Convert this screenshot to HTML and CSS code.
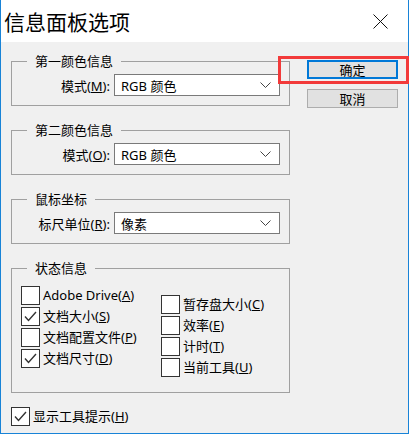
FILE: index.html
```html
<!DOCTYPE html>
<html lang="zh-CN">
<head>
    <meta charset="UTF-8">
    <meta name="viewport" content="width=device-width, initial-scale=1.0">
    <title>信息面板选项</title>
    <link rel="stylesheet" href="styles.css">
</head>
<body>
    <div class="window">
        <div class="titlebar">
            <span class="title">信息面板选项</span>
            <svg class="close" width="15" height="15" viewBox="0 0 15 15">
                <path d="M0.5 0.5 L14.5 14.5 M14.5 0.5 L0.5 14.5" stroke="#111" stroke-width="1" fill="none"/>
            </svg>
        </div>

        <div class="content">
            <div class="left-col">
                <!-- 第一颜色 -->
                <fieldset class="group">
                    <legend>第一颜色信息</legend>
                    <div class="field-row">
                        <label>模式(<u>M</u>):</label>
                        <div class="select">
                            <span>RGB 颜色</span>
                            <svg width="11" height="6" viewBox="0 0 11 6"><path d="M0.5 0.5 L5.5 5.5 L10.5 0.5" stroke="#444" fill="none"/></svg>
                        </div>
                    </div>
                </fieldset>

                <!-- 第二颜色 -->
                <fieldset class="group">
                    <legend>第二颜色信息</legend>
                    <div class="field-row">
                        <label>模式(<u>O</u>):</label>
                        <div class="select">
                            <span>RGB 颜色</span>
                            <svg width="11" height="6" viewBox="0 0 11 6"><path d="M0.5 0.5 L5.5 5.5 L10.5 0.5" stroke="#444" fill="none"/></svg>
                        </div>
                    </div>
                </fieldset>

                <fieldset class="group">
                    <legend>鼠标坐标</legend>
                    <div class="field-row">
                        <label>标尺单位(<u>R</u>):</label>
                        <div class="select">
                            <span>像素</span>
                            <svg width="11" height="6" viewBox="0 0 11 6"><path d="M0.5 0.5 L5.5 5.5 L10.5 0.5" stroke="#444" fill="none"/></svg>
                        </div>
                    </div>
                </fieldset>

                <fieldset class="group status">
                    <legend>状态信息</legend>
                    <div class="check-cols">
                        <div class="check-list">
                            <label class="check"><span class="box"></span><span>Adobe Drive(<u>A</u>)</span></label>
                            <label class="check"><span class="box"><svg width="17" height="17" viewBox="0 0 17 17"><path d="M3 8.5 L6.5 12.5 L14 4" stroke="#333" stroke-width="1.4" fill="none"/></svg></span><span>文档大小(<u>S</u>)</span></label>
                            <label class="check"><span class="box"></span><span>文档配置文件(<u>P</u>)</span></label>
                            <label class="check"><span class="box"><svg width="17" height="17" viewBox="0 0 17 17"><path d="M3 8.5 L6.5 12.5 L14 4" stroke="#333" stroke-width="1.4" fill="none"/></svg></span><span>文档尺寸(<u>D</u>)</span></label>
                        </div>
                        <div class="check-list right">
                            <label class="check"><span class="box"></span><span>暂存盘大小(<u>C</u>)</span></label>
                            <label class="check"><span class="box"></span><span>效率(<u>E</u>)</span></label>
                            <label class="check"><span class="box"></span><span>计时(<u>T</u>)</span></label>
                            <label class="check"><span class="box"></span><span>当前工具(<u>U</u>)</span></label>
                        </div>
                    </div>
                </fieldset>

                <label class="check tooltip-check"><span class="box"><svg width="17" height="17" viewBox="0 0 17 17"><path d="M3 8.5 L6.5 12.5 L14 4" stroke="#333" stroke-width="1.4" fill="none"/></svg></span><span>显示工具提示(<u>H</u>)</span></label>
            </div>

            <div class="right-col">
                <button class="btn default">确定</button>
                <button class="btn">取消</button>
            </div>
        </div>

        <!-- annotation -->
        <div class="highlight"></div>
    </div>
</body>
</html>
```

FILE: styles.css
```css
body {
    margin: 0;
    font-family: "Noto Sans", "Noto Sans CJK SC", sans-serif;
    font-size: 13px;
    color: #000;
}
.window {
    position: relative;
    width: 407px;
    height: 433px;
    background-color: #f0f0f0;
    border-left: 1px solid #1883d7;
    border-right: 1px solid #1883d7;
    border-bottom: 1px solid #1883d7;
}
.titlebar {
    height: 42px;
    background-color: #fff;
    display: flex;
    justify-content: space-between;
    align-items: center;
    padding-left: 3px;
    padding-right: 20px;
}
.title {
    font-family: "Noto Sans CJK SC", sans-serif;
    font-size: 21px;
    line-height: 24px;
}
.close {
    display: block;
}
.content {
    display: flex;
    padding: 11px 0 0 10px;
}
.left-col {
    width: 279px;
}
.group {
    margin: 0 0 16px 0;
    padding: 5px 9px 9px 9px;
    border: 1px solid #a0a0a0;
    min-inline-size: 0;
}
.group legend {
    margin-left: 6px;
    padding: 0 8px;
    height: 16px;
    line-height: 16px;
    font-family: "Noto Sans CJK SC", sans-serif;
}
.field-row {
    display: flex;
    justify-content: flex-end;
    align-items: center;
    gap: 4px;
    height: 22px;
}
.select {
    height: 20px;
    width: 150px;
    background-color: #fff;
    border: 1px solid #7a7a7a;
    display: flex;
    justify-content: space-between;
    align-items: center;
    padding: 0 8px 0 6px;
}
.select svg {
    display: block;
}
.status {
    padding: 10px 9px 15px 9px;
}
.check-cols {
    display: flex;
}
.check-list {
    display: flex;
    flex-direction: column;
    gap: 2px;
    width: 140px;
    flex-shrink: 0;
}
.check-list.right {
    margin-top: 9px;
    width: auto;
    flex-shrink: 1;
}
.check {
    display: flex;
    align-items: center;
    gap: 3px;
    height: 19px;
    line-height: 19px;
    white-space: nowrap;
}
.box {
    width: 17px;
    height: 17px;
    background-color: #fff;
    border: 1px solid #333;
    display: block;
    flex-shrink: 0;
}
.box svg {
    display: block;
}
.tooltip-check {
    margin-top: -2px;
}
.right-col {
    margin-left: 17px;
    width: 91px;
    padding-top: 7px;
    display: flex;
    flex-direction: column;
    gap: 10px;
}
.btn {
    height: 19px;
    width: 91px;
    padding: 0;
    font-family: "Noto Sans CJK SC", sans-serif;
    font-size: 13px;
    line-height: 15px;
    color: #000;
    background-color: #e1e1e1;
    border: 1px solid #adadad;
}
.btn.default {
    border: 2px solid #0078d7;
}
.highlight {
    position: absolute;
    left: 277px;
    top: 56px;
    width: 125px;
    height: 22px;
    border: 3px solid #f23a3a;
}
```
